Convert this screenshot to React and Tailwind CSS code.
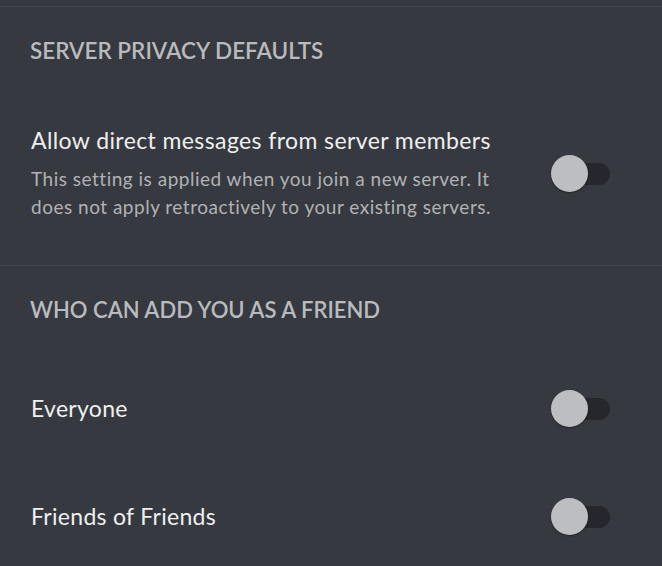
import React from "react";

function Toggle() {
  return (
    <div className="relative w-[59px] h-[37px] shrink-0">
      <div className="absolute right-0 top-[8px] h-[22px] w-[50px] rounded-full bg-[#26272c]" />
      <div className="absolute left-0 top-0 w-[37px] h-[37px] rounded-full bg-[#bdbec2] shadow-[0_1px_2px_rgba(0,0,0,0.35)]" />
    </div>
  );
}

function OptionRow({ label }) {
  return (
    <div className="h-[108px] flex items-center justify-between pl-[31px] pr-[52px]">
      <span className="text-[23px] leading-[28px] tracking-[0.3px] text-[#eeeff0]">{label}</span>
      <Toggle />
    </div>
  );
}

export default function App() {
  return (
    <div className="min-h-screen bg-[#36393f] font-['Lato','Roboto',sans-serif]">
      <div className="pt-[6px]">
        <div className="h-px bg-[#44474e]" />
      </div>

      {/* Server privacy defaults */}
      <section className="pt-[30px] pb-[44px]">
        <h2 className="px-[30px] text-[22.5px] leading-[28px] font-semibold uppercase text-[#b9bbbe]">
          Server Privacy Defaults
        </h2>
        <div className="mt-[61px] flex items-center justify-between pl-[31px] pr-[52px]">
          <div className="w-[470px]">
            <div className="text-[23px] leading-[28px] tracking-[0.4px] text-[#eeeff0]">
              Allow direct messages from server members
            </div>
            <p className="mt-[11px] text-[19px] leading-[28px] tracking-[0.5px] text-[#b0b2b6]">
              This setting is applied when you join a new server. It does not apply retroactively to your existing servers.
            </p>
          </div>
          <Toggle />
        </div>
      </section>

      <div className="h-px bg-[#44474e]" />

      {/* Friend requests */}
      <section className="pt-[30px]">
        <h2 className="px-[30px] text-[22px] leading-[28px] font-semibold uppercase text-[#b9bbbe]">
          Who can add you as a friend
        </h2>
        <div className="mt-[30px]">
          <OptionRow label="Everyone" />
          <OptionRow label="Friends of Friends" />
        </div>
      </section>
    </div>
  );
}
